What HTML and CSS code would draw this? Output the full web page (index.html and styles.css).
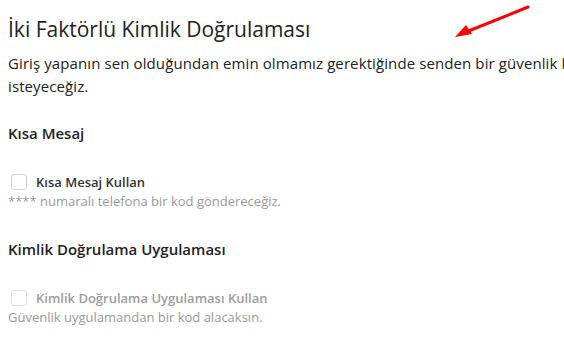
FILE: index.html
```html
<!DOCTYPE html>
<html lang="tr">
<head>
<meta charset="utf-8">
<link rel="stylesheet" href="styles.css">
</head>
<body>
<div class="page">
  <h1 class="title">İki Faktörlü Kimlik Doğrulaması</h1>
  <p class="lead">Giriş yapanın sen olduğundan emin olmamız gerektiğinde senden bir güvenlik kodu isteyeceğiz.</p>

  <section class="section first">
    <h2 class="section-title">Kısa Mesaj</h2>
    <label class="check">
      <span class="box"></span>
      <span class="check-label">Kısa Mesaj Kullan</span>
    </label>
    <p class="help">**** numaralı telefona bir kod göndereceğiz.</p>
  </section>

  <section class="section">
    <h2 class="section-title">Kimlik Doğrulama Uygulaması</h2>
    <label class="check disabled">
      <span class="box"></span>
      <span class="check-label">Kimlik Doğrulama Uygulaması Kullan</span>
    </label>
    <p class="help">Güvenlik uygulamandan bir kod alacaksın.</p>
  </section>
</div>
<svg class="arrow" width="90" height="45" viewBox="0 0 90 45">
  <line x1="82" y1="7" x2="20" y2="32" stroke="#ff0000" stroke-width="3" stroke-linecap="round"/>
  <polygon points="9,37 20,25 26,34" fill="#ff0000"/>
</svg>
</body>
</html>
```
FILE: styles.css
```css
html, body { margin: 0; padding: 0; background: #fff; }
body {
  font-family: "Open Sans", "Noto Sans", sans-serif;
  color: #222;
  overflow: hidden;
  width: 564px;
  height: 346px;
}
.page { padding: 15px 8px 0 8px; white-space: nowrap; }
.title {
  margin: 0;
  font-size: 21px;
  font-weight: 400;
  line-height: 28px;
  color: #222;
}
.lead {
  margin: 9px 0 0;
  font-size: 15px;
  line-height: 23px;
  letter-spacing: 0.1px;
  white-space: normal;
  width: 600px;
  color: #222;
}
.section { margin-top: 28px; }
.section.first { margin-top: 24px; }
.section-title {
  margin: 0;
  font-size: 15px;
  font-weight: 600;
  line-height: 23px;
  color: #222;
}
.check {
  display: flex;
  align-items: center;
  gap: 9px;
  height: 20px;
  margin-top: 27px;
  padding-left: 3px;
}
.box {
  box-sizing: border-box;
  width: 16px;
  height: 16px;
  border: 1px solid #d3d3d3;
  border-radius: 3px;
  background: #fff;
}
.check-label {
  font-size: 13px;
  font-weight: 600;
  line-height: 20px;
  color: #333;
}
.check.disabled .box { border-color: #e0e0e0; }
.check.disabled .check-label { color: #9c9c9c; }
.help {
  margin: 0;
  font-size: 13px;
  line-height: 18px;
  color: #999;
}
.arrow { position: absolute; left: 446px; top: 0; }
```
